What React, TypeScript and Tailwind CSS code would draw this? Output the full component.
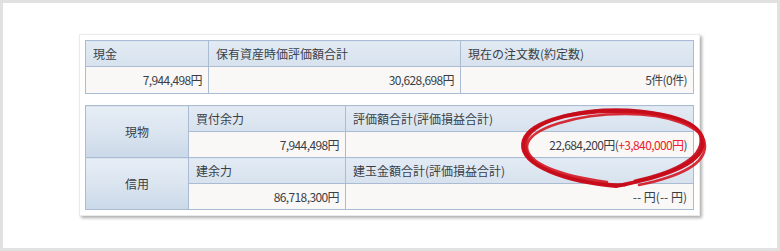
const hd = "h-[26px] border border-[#a9bcd3] bg-gradient-to-b from-[#e3ebf4] to-[#d7e2ee] px-[7px] text-left font-normal";
const dt = "h-[26px] border border-[#a9bcd3] bg-[#f9f8f6] px-[6px] text-right tracking-[-0.6px] whitespace-pre";
const side = "border border-[#a9bcd3] bg-gradient-to-b from-[#e6edf5] via-[#dbe5f0] to-[#cad8e8] text-center font-normal";

// Hand-drawn red marker loop around the valuation figure
function RedLoop() {
  return (
    <svg
      className="pointer-events-none absolute left-[514px] top-[103px]"
      width="194"
      height="86"
      viewBox="0 0 194 86"
      fill="none"
      strokeLinecap="round"
      strokeLinejoin="round"
    >
      <path
        d="M100 80 C 140 72, 184 60, 186 38 C 188 14, 140 5, 98 5 C 52 5, 8 17, 6 38 C 4 60, 50 76, 99 80"
        stroke="#cc0f1e"
        strokeWidth="3.8"
      />
      <path
        d="M118 75 C 160 66, 190 50, 183 28 C 176 10, 124 2, 86 4 C 40 7, 3 23, 9 44 C 14 64, 62 78, 108 79"
        stroke="#c40c1b"
        strokeWidth="3"
        opacity="0.92"
      />
      <path
        d="M122 79 C 165 70, 188 58, 188 40 C 188 20, 150 8, 108 8 C 60 8, 12 22, 10 40 C 9 58, 45 70, 90 76"
        stroke="#d3121e"
        strokeWidth="2.6"
        opacity="0.88"
      />
    </svg>
  );
}

export default function App() {
  return (
    <div className="relative h-[251px] w-[780px] border-[3px] border-[#e1e1e1] bg-white pl-[76px] pt-[31px] font-['Noto_Sans_CJK_JP',sans-serif] text-[12px] leading-none text-[#3a3f47]">
      <div className="w-[621px] border border-[#ebebeb] bg-white p-[5px] shadow-[2px_2px_3px_rgba(0,0,0,0.32)]">
        {/* account summary */}
        <table className="w-[608px] table-fixed border-collapse">
          <colgroup>
            <col className="w-[123px]" />
            <col className="w-[252px]" />
            <col className="w-[233px]" />
          </colgroup>
          <thead>
            <tr>
              <th className={hd}>現金</th>
              <th className={hd}>保有資産時価評価額合計</th>
              <th className={hd}>現在の注文数(約定数)</th>
            </tr>
          </thead>
          <tbody>
            <tr>
              <td className={`${dt} h-[27px]`}>7,944,498円</td>
              <td className={`${dt} h-[27px]`}>30,628,698円</td>
              <td className={`${dt} h-[27px]`}>5件(0件)</td>
            </tr>
          </tbody>
        </table>

        {/* buying power / margin */}
        <table className="mt-[11px] w-[608px] table-fixed border-collapse">
          <colgroup>
            <col className="w-[103px]" />
            <col className="w-[157px]" />
            <col className="w-[348px]" />
          </colgroup>
          <tbody>
            <tr>
              <th rowSpan={2} className={side}>現物</th>
              <th className={hd}>買付余力</th>
              <th className={hd}>評価額合計(評価損益合計)</th>
            </tr>
            <tr>
              <td className={dt}>7,944,498円</td>
              <td className={dt}>
                22,684,200円(<span className="text-[#f0202a]">+3,840,000円</span>)
              </td>
            </tr>
            <tr>
              <th rowSpan={2} className={side}>信用</th>
              <th className={hd}>建余力</th>
              <th className={hd}>建玉金額合計(評価損益合計)</th>
            </tr>
            <tr>
              <td className={dt}>86,718,300円</td>
              <td className={`${dt} tracking-normal`}>-- 円(-- 円)</td>
            </tr>
          </tbody>
        </table>
      </div>
      <RedLoop />
    </div>
  );
}
